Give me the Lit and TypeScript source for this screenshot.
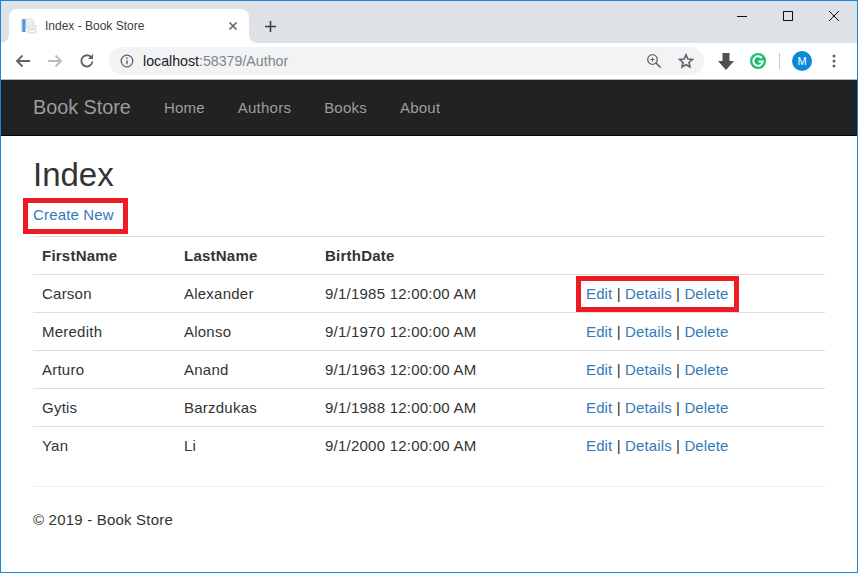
import { LitElement, html, css } from "lit";
import { customElement } from "lit/decorators.js";

const rows = [
  ["Carson", "Alexander", "9/1/1985 12:00:00 AM"],
  ["Meredith", "Alonso", "9/1/1970 12:00:00 AM"],
  ["Arturo", "Anand", "9/1/1963 12:00:00 AM"],
  ["Gytis", "Barzdukas", "9/1/1988 12:00:00 AM"],
  ["Yan", "Li", "9/1/2000 12:00:00 AM"],
];

@customElement("app-root")
export class AppRoot extends LitElement {
  static styles = css`
    :host { display: block; width: 858px; height: 573px; box-sizing: border-box; border: 1px solid #1a86d9; font-family: "Liberation Sans", Arial, sans-serif; background: #fff; overflow: hidden; color: #333; }
    .tabstrip { height: 42px; background: #dee1e6; display: flex; align-items: flex-end; padding-left: 8px; position: relative; }
    .tab { width: 240px; height: 34px; box-sizing: border-box; background: #fff; border-radius: 8px 8px 0 0; display: flex; align-items: center; padding: 0 11px 0 12px; font-size: 12px; color: #3c4043; position: relative; }
    .tab::before, .tab::after { content: ""; position: absolute; bottom: 0; width: 8px; height: 8px; }
    .tab::before { left: -8px; background: radial-gradient(circle at 0 0, #dee1e6 7.5px, #fff 8px); }
    .tab::after { right: -8px; background: radial-gradient(circle at 100% 0, #dee1e6 7.5px, #fff 8px); }
    .tab .title { margin-left: 8px; flex: 1; }
    .plus { margin-left: 16px; height: 34px; display: flex; align-items: center; }
    .winctl { position: absolute; top: 0; right: 0; display: flex; }
    .winctl svg { display: block; width: 46px; height: 30px; }
    .toolbar { height: 37px; background: #fff; display: flex; align-items: center; border-bottom: 1px solid #b5b5b5; box-sizing: border-box; padding-left: 13px; }
    .nav-ic { display: block; width: 18px; height: 18px; margin-right: 14px; flex: none; }
    .omni { width: 595px; height: 28px; border-radius: 14px; background: #f1f3f4; display: flex; align-items: center; padding: 0 10px 0 11px; box-sizing: border-box; font-size: 14.2px; color: #80868b; flex: none; margin-left: -1px; }
    .omni .host { color: #202124; }
    .omni .url { margin-left: 9px; flex: 1; }
    .omni svg { display: block; flex: none; }
    .zoom-ic { margin-right: 16px; }
    .ext { display: flex; align-items: center; flex: 1; padding-left: 14px; }
    .ext svg { display: block; flex: none; }
    .ext .g { margin-left: 16px; }
    .sep { width: 1px; height: 16px; background: #c6c8ca; margin: 0 12px 0 13px; }
    .avatar { width: 20px; height: 20px; border-radius: 50%; background: #0b88d8; color: #fff; font-size: 11px; display: flex; align-items: center; justify-content: center; }
    .ext .dots { margin-left: 20px; }
    .navbar { height: 56px; box-sizing: border-box; background: #222; border-bottom: 1px solid #080808; display: flex; align-items: center; padding-left: 32px; font-size: 15px; letter-spacing: 0.23px; color: #9d9d9d; }
    .brand { font-size: 19.8px; letter-spacing: 0; margin-right: 33px; }
    .navbar a { margin-right: 33px; }
    .main { padding: 0 32px; }
    h1 { margin: 0; font-weight: 400; font-size: 33px; line-height: 36px; color: #333; padding-top: 21px; }
    .create { margin-top: 5px; height: 32px; font-size: 15px; letter-spacing: 0.16px; display: flex; align-items: center; }
    a.l { color: #337ab7; text-decoration: none; }
    .boxed { position: relative; }
    .boxed::after { content: ""; position: absolute; border: 5px solid #ed1c24; pointer-events: none; box-sizing: border-box; }
    .create .boxed::after { left: -10px; right: -14px; top: -8px; bottom: -11px; }
    table { border-collapse: collapse; table-layout: fixed; width: 792px; font-size: 15px; letter-spacing: 0.23px; margin-top: 6px; }
    th, td { height: 38px; box-sizing: border-box; padding: 0 9px; text-align: left; border-top: 1px solid #ddd; color: #333; }
    th { font-weight: 700; }
    td.actions { letter-spacing: 0.13px; }
    td .boxed::after { left: -10px; right: -10px; top: -9px; bottom: -10px; }
    .footer { margin-top: 21px; border-top: 1px solid #eee; padding-top: 24px; font-size: 15px; letter-spacing: 0.2px; line-height: 18px; }
  `;

  render() {
    return html`
      <div class="tabstrip">
        <div class="tab">
          <svg width="16" height="16" viewBox="0 0 16 16"><path d="M5 1h6l2 2v7H5z" fill="#eef0f4" stroke="#d5d9e0" stroke-width=".7"/><rect x="0.500" y="1" width="2" height="13" fill="#a9cdea"/><rect x="1.500" y="1" width="3" height="13" fill="#4f97d8"/><rect x="7" y="8" width="8" height="7" fill="#f3f4f6" stroke="#ced2d9" stroke-width=".8"/><path d="M8.500 11h5" stroke="#c4c9d1" stroke-width="1"/></svg>
          <span class="title">Index - Book Store</span>
          <svg width="10" height="10" viewBox="0 0 10 10"><path d="M1.500 1.500l7 7M8.500 1.500l-7 7" stroke="#5f6368" stroke-width="1.600"/></svg>
        </div>
        <div class="plus"><svg width="11" height="11" viewBox="0 0 11 11"><path d="M5.500 0v11M0 5.500h11" stroke="#3c4043" stroke-width="1.600"/></svg></div>
        <div class="winctl">
          <svg viewBox="0 0 46 30"><path d="M18 15.500h10" stroke="#111" stroke-width="1"/></svg>
          <svg viewBox="0 0 46 30"><rect x="18.500" y="10.500" width="9" height="9" fill="none" stroke="#111" stroke-width="1"/></svg>
          <svg viewBox="0 0 46 30"><path d="M18 10l10 10M28 10l-10 10" stroke="#111" stroke-width="1"/></svg>
        </div>
      </div>
      <div class="toolbar">
        <svg class="nav-ic" viewBox="0 0 18 18"><path d="M16 9H3M8.500 3.500L3 9l5.500 5.500" fill="none" stroke="#5f6368" stroke-width="1.800"/></svg>
        <svg class="nav-ic" viewBox="0 0 18 18"><path d="M2 9h13M9.500 3.500L15 9l-5.500 5.500" fill="none" stroke="#b8babd" stroke-width="1.800"/></svg>
        <svg class="nav-ic" viewBox="0 0 18 18"><path d="M14.500 9.500A5.600 5.600 0 1 1 13 5" fill="none" stroke="#5f6368" stroke-width="1.800"/><path d="M15 2v5h-5z" fill="#5f6368"/></svg>
        <div class="omni">
          <svg width="14" height="14" viewBox="0 0 14 14"><circle cx="7" cy="7" r="5.800" fill="none" stroke="#5f6368" stroke-width="1.300"/><path d="M7 6.200v4M7 3.600v1.400" stroke="#5f6368" stroke-width="1.400"/></svg>
          <span class="url"><span class="host">localhost</span>:58379/Author</span>
          <svg class="zoom-ic" width="16" height="16" viewBox="0 0 16 16"><circle cx="6.500" cy="6.500" r="4.800" fill="none" stroke="#5f6368" stroke-width="1.300"/><path d="M10 10l4.500 4.500" stroke="#5f6368" stroke-width="1.600"/><path d="M6.500 4.500v4M4.500 6.500h4" stroke="#5f6368" stroke-width="1"/></svg>
          <svg width="16" height="16" viewBox="0 0 16 16"><path d="M8 1.800l1.900 4.200 4.500.5-3.400 3 1 4.500L8 11.700 4 14l1-4.500-3.400-3 4.500-.5z" fill="none" stroke="#5f6368" stroke-width="1.600"/></svg>
        </div>
        <div class="ext">
          <svg width="16" height="17" viewBox="0 0 16 17"><path d="M4.500 0h7v8H16l-8 9-8-9h4.500z" fill="#505050"/></svg>
          <svg class="g" width="16" height="16" viewBox="0 0 16 16"><circle cx="8" cy="8" r="8" fill="#15c26b"/><path d="M11.800 5.200A4.700 4.700 0 1 0 12.700 8.500H8.500" fill="none" stroke="#fff" stroke-width="2"/></svg>
          <div class="sep"></div>
          <div class="avatar">M</div>
          <svg class="dots" width="4" height="14" viewBox="0 0 4 14"><circle cx="2" cy="2" r="1.500" fill="#5f6368"/><circle cx="2" cy="7" r="1.500" fill="#5f6368"/><circle cx="2" cy="12" r="1.500" fill="#5f6368"/></svg>
        </div>
      </div>
      <nav class="navbar">
        <span class="brand">Book Store</span>
        <a>Home</a><a>Authors</a><a>Books</a><a>About</a>
      </nav>
      <div class="main">
        <h1>Index</h1>
        <div class="create"><a class="l boxed">Create New</a></div>
        <table>
          <colgroup><col style="width:142px"/><col style="width:141px"/><col style="width:261px"/><col style="width:248px"/></colgroup>
          <thead><tr><th>FirstName</th><th>LastName</th><th>BirthDate</th><th></th></tr></thead>
          <tbody>
            ${rows.map((r, i) => html`<tr>
              <td>${r[0]}</td><td>${r[1]}</td><td>${r[2]}</td>
              <td class="actions"><span class=${i === 0 ? "boxed" : ""}><a class="l">Edit</a> | <a class="l">Details</a> | <a class="l">Delete</a></span></td>
            </tr>`)}
          </tbody>
        </table>
        <div class="footer">© 2019 - Book Store</div>
      </div>
    `;
  }
}
